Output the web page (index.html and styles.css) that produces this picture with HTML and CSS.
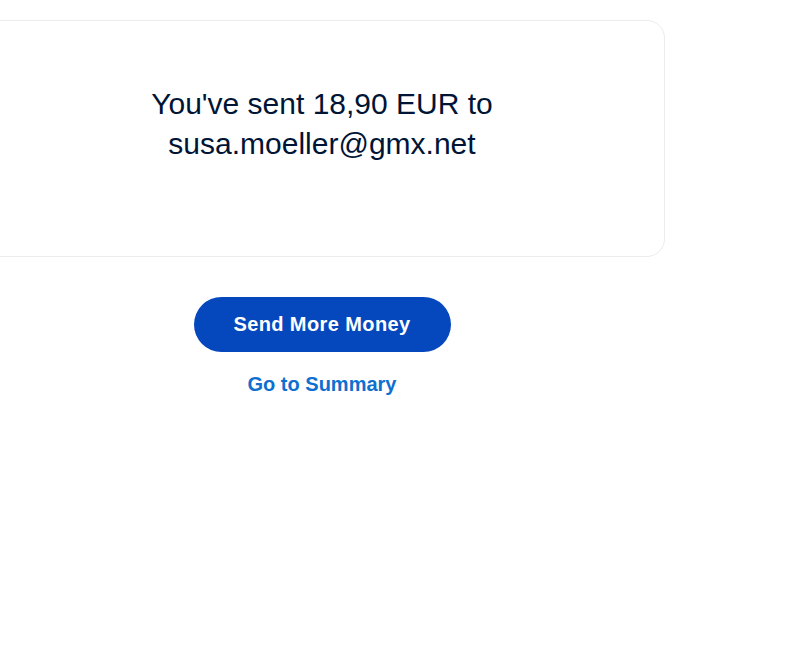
FILE: index.html
```html
<!DOCTYPE html>
<html lang="en">
<head>
<meta charset="utf-8">
<title>Money sent</title>
<link rel="stylesheet" href="styles.css">
</head>
<body>
<main class="page">
  <section class="card">
    <p class="message">You've sent 18,90 EUR to<br>susa.moeller@gmx.net</p>
  </section>
  <div class="actions">
    <button class="btn-primary" type="button">Send More Money</button>
    <a class="link" href="#">Go to Summary</a>
  </div>
</main>
</body>
</html>
```
FILE: styles.css
```css
* { box-sizing: border-box; }
html, body { margin: 0; padding: 0; background: #ffffff; }
body {
  font-family: "Liberation Sans", Arial, sans-serif;
  color: #001435;
}
.page {
  width: 686px;
  margin-left: -21px;
  padding-top: 20px;
}
.card {
  height: 237px;
  border: 1px solid #ececec;
  border-radius: 18px;
  display: flex;
  justify-content: center;
  padding-top: 63px;
}
.message {
  margin: 0;
  font-size: 30px;
  line-height: 40px;
  text-align: center;
}
.actions {
  display: flex;
  flex-direction: column;
  align-items: center;
  padding-top: 40px;
  gap: 21px;
}
.btn-primary {
  width: 257px;
  height: 55px;
  border: 0;
  border-radius: 28px;
  background: #0548be;
  color: #ffffff;
  font-family: "Liberation Sans", Arial, sans-serif;
  font-weight: 700;
  font-size: 20px;
  letter-spacing: 0.4px;
  cursor: pointer;
}
.link {
  color: #0f6fd0;
  font-weight: 700;
  font-size: 20px;
  text-decoration: none;
}
```
